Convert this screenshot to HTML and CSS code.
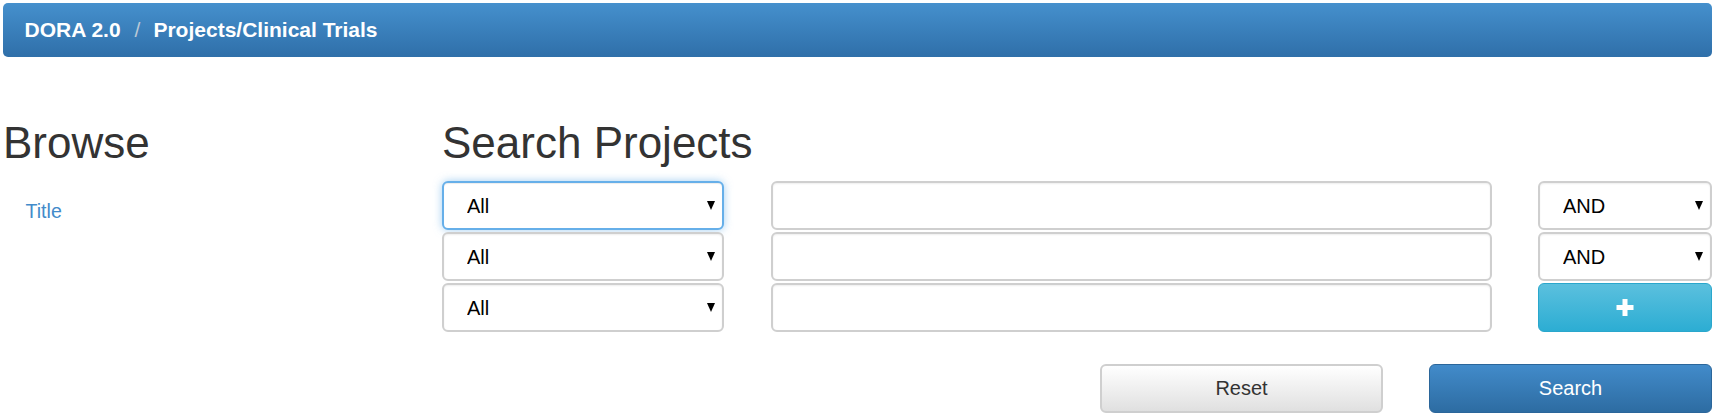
FILE: index.html
```html
<!DOCTYPE html>
<html lang="en">
<head>
<meta charset="utf-8">
<title>DORA 2.0 - Projects/Clinical Trials</title>
<link rel="stylesheet" href="styles.css">
</head>
<body>
<div class="page">
  <nav class="topbar">
    <ol class="crumbs">
      <li class="crumb">DORA 2.0</li>
      <li class="sep" aria-hidden="true">/</li>
      <li class="crumb">Projects/Clinical Trials</li>
    </ol>
  </nav>

  <div class="main">
    <aside class="browse">
      <h1 class="heading">Browse</h1>
      <ul class="browse-list">
        <li><a class="browse-link" href="#">Title</a></li>
      </ul>
    </aside>

    <section class="search">
      <h1 class="heading">Search Projects</h1>
      <form class="search-form">
        <div class="rows">
          <div class="field-row">
            <div class="select-wrap"><select class="control select is-focused"><option>All</option></select></div>
            <input class="control text" type="text">
            <div class="select-wrap"><select class="control select"><option>AND</option><option>OR</option><option>NOT</option></select></div>
          </div>
          <div class="field-row">
            <div class="select-wrap"><select class="control select"><option>All</option></select></div>
            <input class="control text" type="text">
            <div class="select-wrap"><select class="control select"><option>AND</option><option>OR</option><option>NOT</option></select></div>
          </div>
          <div class="field-row">
            <div class="select-wrap"><select class="control select"><option>All</option></select></div>
            <input class="control text" type="text">
            <button class="btn btn-add" type="button" aria-label="Add row">
              <svg class="plus" width="18" height="17" viewBox="0 0 18 17"><rect x="6.5" y="0" width="5" height="17" fill="#fff"/><rect x="0.5" y="6" width="17" height="5" fill="#fff"/></svg>
            </button>
          </div>
        </div>
        <div class="actions">
          <button class="btn btn-reset" type="reset">Reset</button>
          <button class="btn btn-search" type="submit">Search</button>
        </div>
      </form>
    </section>
  </div>
</div>
</body>
</html>
```

FILE: styles.css
```css
* { box-sizing: border-box; }

html, body {
  margin: 0;
  padding: 0;
  background: #fff;
}

body {
  font-family: "Liberation Sans", Arial, sans-serif;
  font-size: 20px;
  color: #333;
}

.page {
  width: 1709px;
  margin-left: 3px;
  padding-top: 3px;
}

/* top bar */
.topbar {
  height: 53.5px;
  border-radius: 5px;
  background: linear-gradient(to bottom, #4590cd 0%, #2f6fa9 100%);
  display: flex;
  align-items: center;
  padding-left: 21.5px;
}

.crumbs {
  list-style: none;
  margin: 0;
  padding: 0;
  display: flex;
  align-items: center;
  font-size: 21px;
  font-weight: bold;
  color: #fff;
}

.sep {
  font-weight: normal;
  color: #b9c8d6;
  padding: 0 13px 0 14px;
}

/* main layout */
.main {
  display: grid;
  grid-template-columns: 439px 1270px;
  padding-top: 62.5px;
}

.heading {
  margin: 0 0 14px;
  font-size: 44px;
  font-weight: normal;
  line-height: 1.1;
  color: #333;
}

.browse-list {
  list-style: none;
  margin: 30px 0 0;
  padding: 0;
}

.browse-link {
  display: block;
  padding: 0 22.5px;
  font-size: 19.6px;
  line-height: 28.6px;
  color: #428bca;
  text-decoration: none;
}

/* form */
.rows {
  display: flex;
  flex-direction: column;
  gap: 2px;
}

.field-row {
  display: grid;
  grid-template-columns: 282px 721px 174px;
  justify-content: space-between;
}

.control {
  display: block;
  width: 100%;
  height: 49px;
  margin: 0;
  border: 2px solid #cfcfcf;
  border-radius: 6px;
  background: #fff;
  box-shadow: inset 0 1px 2px rgba(0, 0, 0, 0.07);
  font-family: inherit;
  font-size: 20px;
  color: #000;
  outline: none;
}

.text {
  padding: 0 23px;
}

.select-wrap {
  position: relative;
}

.select-wrap::after {
  content: "";
  position: absolute;
  right: 9px;
  top: 20px;
  width: 0;
  height: 0;
  border-left: 4.5px solid transparent;
  border-right: 4.5px solid transparent;
  border-top: 9px solid #000;
  pointer-events: none;
}

.select {
  appearance: none;
  -webkit-appearance: none;
  padding: 0 30px 0 23px;
}

.select.is-focused {
  border-color: #66afe9;
  box-shadow: inset 0 1px 1px rgba(0, 0, 0, 0.075), 0 0 8px rgba(102, 175, 233, 0.6);
}

.btn {
  display: flex;
  align-items: center;
  justify-content: center;
  height: 49px;
  margin: 0;
  border-radius: 6px;
  font-family: inherit;
  font-size: 20px;
  cursor: pointer;
}

.btn-add {
  width: 100%;
  border: 1.5px solid #2aa7cc;
  background: linear-gradient(to bottom, #5bc0de 0%, #2cadd3 100%);
}

.actions {
  display: flex;
  justify-content: flex-end;
  gap: 46px;
  margin-top: 32px;
}

.btn-reset,
.btn-search {
  width: 283px;
}

.btn-reset {
  border: 2px solid #cfcfcf;
  color: #333;
  background: linear-gradient(to bottom, #ffffff 0%, #e0e0e0 100%);
}

.btn-search {
  border: 1.5px solid #2b669a;
  color: #fff;
  background: linear-gradient(to bottom, #428bca 0%, #2d6ca2 100%);
}
```
